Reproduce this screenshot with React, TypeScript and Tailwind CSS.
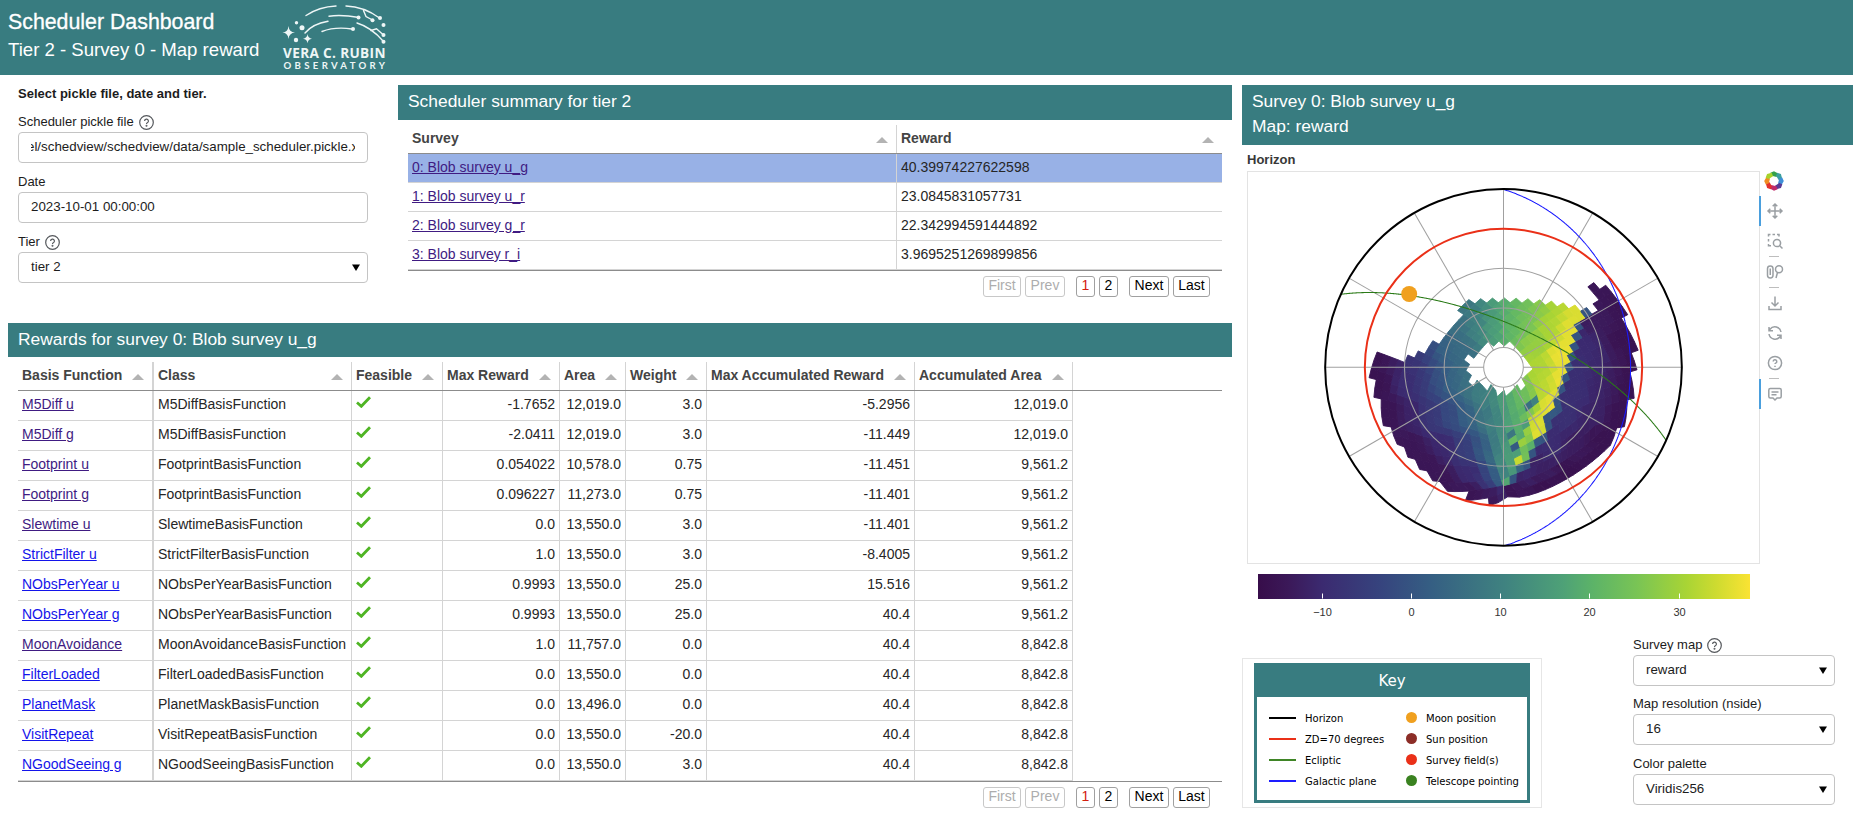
import React from "react";

const RAD = Math.PI / 180;
const LAT = -30.24 * RAD;
const LST = 343.5 * RAD;
const CX = 580.5;
const CY = 562;
const R = 535;

type Pt = [number, number];

/* ---------- sky projection ---------- */

function project(ra: number, dec: number): { x: number; y: number; zd: number } {
  const ha = LST - ra;
  const up = Math.sin(LAT) * Math.sin(dec) + Math.cos(LAT) * Math.cos(dec) * Math.cos(ha);
  const east = -Math.cos(dec) * Math.sin(ha);
  const north = Math.sin(dec) * Math.cos(LAT) - Math.cos(dec) * Math.cos(ha) * Math.sin(LAT);
  const zd = Math.acos(Math.max(-1, Math.min(1, up)));
  const h = Math.hypot(east, north) || 1;
  const r = (zd / (Math.PI / 2)) * R;
  return { x: CX - (east / h) * r, y: CY - (north / h) * r, zd };
}

function greatCircle(poleRa: number, poleDec: number): string {
  const a = poleRa * RAD;
  const d = poleDec * RAD;
  const u = [-Math.sin(a), Math.cos(a), 0];
  const v = [-Math.sin(d) * Math.cos(a), -Math.sin(d) * Math.sin(a), Math.cos(d)];
  let path = "";
  let pen = false;
  for (let i = 0; i <= 1440; i++) {
    const t = (i / 720) * Math.PI;
    const p = u.map((c, k) => c * Math.cos(t) + v[k] * Math.sin(t));
    const q = project(Math.atan2(p[1], p[0]), Math.asin(p[2]));
    if (q.zd < Math.PI / 2) {
      path += `${pen ? "L" : "M"}${q.x.toFixed(1)} ${q.y.toFixed(1)}`;
      pen = true;
    } else pen = false;
  }
  return path;
}

const JR = [2, 2, 2, 2, 3, 3, 3, 3, 4, 4, 4, 4];
const JP = [1, 3, 5, 7, 0, 2, 4, 6, 1, 3, 5, 7];

function faceToSky(f: number, x: number, y: number) {
  const jr = JR[f] - x - y;
  let nr = 1;
  let z: number;
  if (jr < 1) {
    nr = jr;
    z = 1 - (nr * nr) / 3;
  } else if (jr > 3) {
    nr = 4 - jr;
    z = (nr * nr) / 3 - 1;
  } else z = ((2 - jr) * 2) / 3;
  const phi = nr > 1e-9 ? ((Math.PI / 4) * (JP[f] * nr + x - y)) / nr : 0;
  return project(phi, Math.asin(Math.max(-1, Math.min(1, z))));
}

/* ---------- reward field ---------- */

const OUTLINE: Pt[] = [[201,513],[285,545],[298,524],[309,530],[326,512],[340,520],[370,480],[390,488],[430,430],[462,403],[447,388],[476,364],[690,364],[725,368],[800,378],[815,388],[830,382],[860,398],[870,385],[852,370],[870,358],[835,318],[850,308],[870,325],[887,315],[930,360],[940,375],[953,402],[937,410],[985,510],[968,515],[982,570],[967,573],[975,655],[957,655],[960,680],[945,742],[925,740],[905,795],[860,840],[780,893],[700,930],[630,952],[595,952],[575,965],[540,973],[533,955],[470,962],[474,932],[410,933],[385,900],[360,900],[345,870],[328,865],[310,832],[292,830],[282,800],[260,790],[243,738],[219,735],[213,655],[191,650],[197,595],[178,590]];

const HOLE: Pt[] = [[463,535],[480,518],[498,525],[530,487],[548,497],[566,483],[583,495],[600,482],[668,563],[638,590],[648,612],[632,630],[620,615],[588,645],[576,638],[568,645],[553,618],[535,630],[505,600],[487,614],[473,602],[484,590],[470,573],[480,545]];

const SEAM: Pt[] = [[818,375],[812,400],[800,440],[792,480],[775,520],[770,570],[755,610],[742,650],[735,680],[705,720],[708,750],[690,775],[660,800],[658,835],[620,870],[600,900],[588,918]];

const WEST: number[][] = [[476,370,.45],[520,365,.52],[560,365,.62],[600,370,.68],[640,375,.74],[690,370,.8],[740,375,.88],[790,390,.95],[780,450,.97],[750,520,.98],[755,600,.98],[725,670,.98],[680,720,.96],[720,440,.88],[680,480,.83],[690,560,.88],[700,620,.9],[650,440,.76],[600,440,.69],[550,440,.6],[500,440,.5],[450,430,.42],[400,500,.36],[440,500,.4],[350,500,.25],[300,540,.17],[250,545,.08],[210,530,.03],[200,600,.03],[240,700,.04],[300,600,.14],[340,600,.2],[380,600,.3],[430,600,.38],[470,600,.43],[510,640,.48],[550,660,.53],[600,650,.65],[640,640,.74],[300,700,.1],[360,700,.19],[420,700,.27],[470,700,.36],[520,700,.44],[560,720,.5],[600,720,.63],[640,690,.7],[300,800,.05],[400,800,.12],[470,800,.22],[520,800,.34],[560,800,.48],[400,900,.05],[480,880,.13],[540,890,.24],[570,880,.42],[588,895,.6],[600,800,.62],[600,850,.62],[480,940,.04],[540,950,.05],[570,940,.08],[350,850,.05]];

const EAST: number[][] = [[850,320,.05],[870,420,.07],[930,380,.04],[940,480,.03],[960,560,.02],[920,550,.07],[870,550,.12],[830,500,.13],[800,560,.15],[810,640,.15],[870,630,.11],[760,700,.16],[900,640,.08],[940,640,.03],[930,700,.03],[850,700,.1],[880,780,.03],[800,800,.08],[840,840,.03],[720,800,.14],[700,860,.09],[780,880,.02],[650,880,.12],[620,920,.06],[600,945,.03],[700,925,.02]];

const SPOTS: number[][] = [[662,670,.42],[640,692,.68],[682,655,.5],[625,725,.66],[645,735,.6],[605,755,.45],[680,757,.96],[655,770,.8],[638,785,.84],[615,797,.33],[690,778,.33],[628,835,.92],[650,825,.75],[610,860,.7],[632,860,.38],[590,895,.64],[660,742,.7],[705,740,.72],[640,745,.52],[650,805,.74],[722,700,.33],[605,780,.72]];

const STOPS: [number, number, number, number][] = [[0,55,13,74],[.06,59,24,88],[.13,59,42,112],[.25,54,68,126],[.35,53,94,131],[.5,63,130,128],[.62,78,161,119],[.68,92,179,104],[.77,121,196,85],[.87,168,212,53],[.93,205,219,48],[1,250,227,51]];

function color(v: number): string {
  let i = 0;
  while (i < STOPS.length - 2 && v > STOPS[i + 1][0]) i++;
  const a = STOPS[i];
  const b = STOPS[i + 1];
  const t = Math.max(0, Math.min(1, (v - a[0]) / (b[0] - a[0])));
  return `rgb(${[1, 2, 3].map((k) => Math.round(a[k] + (b[k] - a[k]) * t)).join(",")})`;
}

function inside(poly: Pt[], x: number, y: number): boolean {
  let c = false;
  for (let i = 0, j = poly.length - 1; i < poly.length; j = i++) {
    const [xi, yi] = poly[i];
    const [xj, yj] = poly[j];
    if (yi > y !== yj > y && x < ((xj - xi) * (y - yi)) / (yj - yi) + xi) c = !c;
  }
  return c;
}

function blend(samples: number[][], x: number, y: number): number {
  let s = 0;
  let w = 0;
  for (const [a, b, v] of samples) {
    const k = 1 / Math.pow((a - x) ** 2 + (b - y) ** 2 + 900, 2.6);
    s += v * k;
    w += k;
  }
  return s / w;
}

function seamX(y: number): number {
  if (y < SEAM[0][1]) return SEAM[0][0];
  for (let i = 0; i < SEAM.length - 1; i++) {
    const a = SEAM[i];
    const b = SEAM[i + 1];
    if (y >= a[1] && y < b[1]) return a[0] + ((b[0] - a[0]) * (y - a[1])) / (b[1] - a[1]);
  }
  return 585;
}

function rewardAt(x: number, y: number): number {
  for (const [a, b, v] of SPOTS) if (Math.hypot(a - x, b - y) < 10) return v;
  const d = x - seamX(y);
  if (y < 910 && d > 0 && d < 16) return 0.31;
  return blend(d > 0 ? EAST : WEST, x, y);
}

const CELLS: { points: string; fill: string }[] = [];
for (let f = 0; f < 12; f++)
  for (let i = 0; i < 16; i++)
    for (let j = 0; j < 16; j++) {
      const c = faceToSky(f, (i + 0.5) / 16, (j + 0.5) / 16);
      if (c.zd > 1.4 || !inside(OUTLINE, c.x, c.y) || inside(HOLE, c.x, c.y)) continue;
      const pts = [[0, 0], [1, 0], [1, 1], [0, 1]].map(([a, b]) => {
        const u = Math.min(Math.max((i + a) / 16, 1e-5), 1 - 1e-5);
        const v = Math.min(Math.max((j + b) / 16, 1e-5), 1 - 1e-5);
        const p = faceToSky(f, u, v);
        return `${p.x.toFixed(1)},${p.y.toFixed(1)}`;
      });
      CELLS.push({ points: pts.join(" "), fill: color(rewardAt(c.x, c.y)) });
    }

function SkyMap() {
  const rays = Array.from({ length: 12 }, (_, k) => k * 30 * RAD);
  return (
    <svg width="513" height="393" className="block">
      <g transform="translate(63 9) scale(0.33333)">
        {CELLS.map((c, i) => (
          <polygon key={i} points={c.points} fill={c.fill} stroke={c.fill} strokeWidth="2.8" strokeLinejoin="round" />
        ))}
        <circle cx={CX} cy={CY} r="59" fill="#fff" />
        <g fill="none" stroke="#a0a0a0" strokeWidth="3.1">
          {[59.5, 178, 297].map((r) => (
            <circle key={r} cx={CX} cy={CY} r={r} />
          ))}
          {rays.map((t) => (
            <line key={t} x1={CX + 59.5 * Math.sin(t)} y1={CY + 59.5 * Math.cos(t)} x2={CX + R * Math.sin(t)} y2={CY + R * Math.cos(t)} />
          ))}
        </g>
        <path d={greatCircle(270, 66.56)} fill="none" stroke="#2a7a17" strokeWidth="3.2" />
        <path d={greatCircle(192.86, 27.13)} fill="none" stroke="#1a1aff" strokeWidth="3.2" />
        <circle cx={CX} cy={CY} r="416" fill="none" stroke="#ea3018" strokeWidth="6" />
        <circle cx={CX} cy={CY} r={R} fill="none" stroke="#000" strokeWidth="6" />
        <circle cx="297.5" cy="342" r="24" fill="#f0a01f" />
      </g>
    </svg>
  );
}

/* ---------- small pieces ---------- */

function Help() {
  return (
    <svg width="15" height="15" viewBox="0 0 15 15" fill="none" stroke="#55585c" strokeWidth="1.2">
      <circle cx="7.5" cy="7.5" r="6.8" />
      <path d="M5.6 6.1a1.9 1.9 0 1 1 2.7 1.7c-.6.3-.8.6-.8 1.1" />
      <circle cx="7.5" cy="10.8" r=".4" fill="#55585c" />
    </svg>
  );
}

function Label({ text, help }: { text: string; help?: boolean }) {
  return (
    <div className="flex h-[20px] items-center gap-[5px] text-[13px] text-[#1c1c1c]">
      <span>{text}</span>
      {help && <Help />}
    </div>
  );
}

function Select({ value }: { value: string }) {
  return (
    <div className="flex h-[31px] items-center justify-between rounded-[4px] border border-[#c4c4c4] bg-white pr-[7px] pl-[12px] text-[13.33px] text-[#1c1c1c]">
      <span className="pb-[2px]">{value}</span>
      <svg width="8" height="7" viewBox="0 0 8 7">
        <path d="M0 .5H8L4 7Z" fill="#000" />
      </svg>
    </div>
  );
}

function SortArrow() {
  return (
    <svg width="12" height="6" viewBox="0 0 12 6" className="mt-[2px] shrink-0">
      <path d="M0 6L6 0L12 6Z" fill="#b3b3b3" />
    </svg>
  );
}

function Pager() {
  const box = "flex h-[21px] items-center justify-center rounded-[3px] border bg-white pb-[2px]";
  return (
    <div className="flex justify-end pt-[5px] pr-[12px] text-[14px] text-black">
      <div className={`${box} w-[38px] border-[#c8c8c8] text-[#adadad]`}>First</div>
      <div className={`${box} ml-[4px] w-[40px] border-[#c8c8c8] text-[#adadad]`}>Prev</div>
      <div className={`${box} ml-[11px] w-[19px] border-[#a0a0a0] text-[#d3200f]`}>1</div>
      <div className={`${box} ml-[4px] w-[19px] border-[#a0a0a0]`}>2</div>
      <div className={`${box} ml-[11px] w-[40px] border-[#a0a0a0]`}>Next</div>
      <div className={`${box} ml-[4px] w-[37px] border-[#a0a0a0]`}>Last</div>
    </div>
  );
}

function Logo() {
  return (
    <svg width="112" height="75" viewBox="0 0 112 75" fill="none" stroke="#eef6f6" strokeLinecap="round">
      <g strokeWidth="1.4">
        <path d="M27 15.500C36 9.500 46 6.500 57 6" />
        <path d="M67 6C81 6.500 91 11 100.500 18" />
        <path d="M50 16.200C61 14.500 69 15.500 80 17.500" />
        <path d="M26 33C31 27 39 23 49 21.300" />
        <path d="M43 31.500C52 28 63 27.500 73 29" />
        <path d="M78 23C88 26 96 31.500 104.500 41.500" />
        <path d="M84.500 10.500L87 16.500L93.500 20" />
        <path d="M92 30.500L97.500 28.800L104.500 35" />
      </g>
      <g fill="#eef6f6" stroke="none">
        <circle cx="101" cy="18" r="2" />
        <circle cx="104.500" cy="25" r="2" />
        <circle cx="93.500" cy="20.200" r="2" />
        <circle cx="79.500" cy="17.600" r="2" />
        <circle cx="74" cy="29" r="2" />
        <circle cx="104.500" cy="35" r="2" />
        <circle cx="104.500" cy="41.800" r="2" />
        <circle cx="17.500" cy="22.800" r="1.700" />
        <circle cx="23" cy="27.700" r="2.500" />
        <circle cx="17" cy="40" r="2.200" />
        <path d="M9.500 26Q10 32 16 32.500Q10 33 9.500 39Q9 33 3.500 32.500Q9 32 9.500 26Z" />
        <path d="M28.500 34Q29 38.300 33 38.700Q29 39 28.500 43.300Q28 39 24 38.700Q28 38.300 28.500 34Z" />
        <text x="4" y="58.300" fontFamily="Open Sans, sans-serif" fontWeight="700" fontSize="13.600" textLength="102.500" lengthAdjust="spacing">VERA C. RUBIN</text>
        <text x="4.500" y="68.800" fontFamily="Lato, sans-serif" fontWeight="700" fontSize="9.600" textLength="101.500" lengthAdjust="spacing">OBSERVATORY</text>
      </g>
    </svg>
  );
}

/* ---------- tables ---------- */

const SURVEYS = [
  ["0: Blob survey u_g", "40.39974227622598"],
  ["1: Blob survey u_r", "23.0845831057731"],
  ["2: Blob survey g_r", "22.342994591444892"],
  ["3: Blob survey r_i", "3.9695251269899856"],
];

const COLS: [string, string][] = [
  ["Basis Function", "w-[136px] border-r-2"],
  ["Class", "w-[198px] border-r"],
  ["Feasible", "w-[91px] border-r"],
  ["Max Reward", "w-[117px] border-r"],
  ["Area", "w-[66px] border-r"],
  ["Weight", "w-[81px] border-r"],
  ["Max Accumulated Reward", "w-[208px] border-r"],
  ["Accumulated Area", "w-[158px] border-r"],
];

const ROWS: [string, boolean, string, string, string, string, string, string][] = [
  ["M5Diff u", true, "M5Diff", "-1.7652", "12,019.0", "3.0", "-5.2956", "12,019.0"],
  ["M5Diff g", true, "M5Diff", "-2.0411", "12,019.0", "3.0", "-11.449", "12,019.0"],
  ["Footprint u", true, "Footprint", "0.054022", "10,578.0", "0.75", "-11.451", "9,561.2"],
  ["Footprint g", true, "Footprint", "0.096227", "11,273.0", "0.75", "-11.401", "9,561.2"],
  ["Slewtime u", true, "Slewtime", "0.0", "13,550.0", "3.0", "-11.401", "9,561.2"],
  ["StrictFilter u", false, "StrictFilter", "1.0", "13,550.0", "3.0", "-8.4005", "9,561.2"],
  ["NObsPerYear u", false, "NObsPerYear", "0.9993", "13,550.0", "25.0", "15.516", "9,561.2"],
  ["NObsPerYear g", false, "NObsPerYear", "0.9993", "13,550.0", "25.0", "40.4", "9,561.2"],
  ["MoonAvoidance", true, "MoonAvoidance", "1.0", "11,757.0", "0.0", "40.4", "8,842.8"],
  ["FilterLoaded", false, "FilterLoaded", "0.0", "13,550.0", "0.0", "40.4", "8,842.8"],
  ["PlanetMask", false, "PlanetMask", "0.0", "13,496.0", "0.0", "40.4", "8,842.8"],
  ["VisitRepeat", false, "VisitRepeat", "0.0", "13,550.0", "-20.0", "40.4", "8,842.8"],
  ["NGoodSeeing g", false, "NGoodSeeing", "0.0", "13,550.0", "3.0", "40.4", "8,842.8"],
];

function SummaryTable() {
  return (
    <div className="mt-[5px] ml-[10px] w-[814px]">
      <div className="flex h-[29px] border-b border-[#8c8c8c] font-bold text-[#444]">
        <div className="flex w-[489px] items-center justify-between border-r border-[#d4d4d4] pr-[8px] pl-[4px]">
          <span className="pb-[2px]">Survey</span>
          <SortArrow />
        </div>
        <div className="flex flex-1 items-center justify-between pr-[8px] pl-[4px]">
          <span className="pb-[2px]">Reward</span>
          <SortArrow />
        </div>
      </div>
      {SURVEYS.map(([name, reward], i) => (
        <div key={name} className={`flex h-[29px] border-b border-[#d4d4d4] ${i === 0 ? "bg-[#98b1e6]" : ""}`}>
          <div className="w-[489px] border-r border-[#d4d4d4] pl-[4px] leading-[27px] text-[#401b82] underline">{name}</div>
          <div className="pl-[4px] leading-[27px] text-[#262626]">{reward}</div>
        </div>
      ))}
      <div className="border-t border-[#8c8c8c]">
        <Pager />
      </div>
    </div>
  );
}

function RewardsTable() {
  return (
    <div className="mt-[5px] ml-[10px] w-[1204px]">
      <div className="flex h-[29px] border-b border-[#8c8c8c] font-bold text-[#444]">
        {COLS.map(([name, cls]) => (
          <div key={name} className={`${cls} flex items-center justify-between border-[#d4d4d4] pr-[8px] pl-[4px] whitespace-nowrap`}>
            <span className="pb-[2px]">{name}</span>
            <SortArrow />
          </div>
        ))}
      </div>
      {ROWS.map(([name, visited, cls, ...nums]) => (
        <div key={name} className="flex h-[30px] w-[1055px] border-b border-[#d4d4d4] leading-[27px] text-[#262626]">
          <div className={`${COLS[0][1]} border-[#d4d4d4] pl-[4px]`}>
            <span className={visited ? "text-[#401b82] underline" : "text-[#1414ea] underline"}>{name}</span>
          </div>
          <div className={`${COLS[1][1]} border-[#d4d4d4] pl-[4px] whitespace-nowrap`}>{cls}BasisFunction</div>
          <div className={`${COLS[2][1]} border-[#d4d4d4] pt-[5px] pl-[4px]`}>
            <svg width="15" height="12" viewBox="0 0 15 12" fill="none">
              <path d="M1 6.500L5.300 10.300L14 1.200" stroke="#4fb524" strokeWidth="2.800" />
            </svg>
          </div>
          {nums.map((n, i) => (
            <div key={i} className={`${COLS[i + 3][1]} border-[#d4d4d4] pr-[4px] text-right`}>{n}</div>
          ))}
        </div>
      ))}
      <div className="border-t border-[#8c8c8c]">
        <Pager />
      </div>
    </div>
  );
}

/* ---------- plot tools, colour bar, key ---------- */

const PETALS = ["#35a14b", "#3b9fa0", "#3f8fd8", "#5a3a94", "#c02b6a", "#e2302c", "#f08c22", "#a8d22c"];

function ToolBar() {
  const line = "mx-auto h-px w-[10px] bg-[#bdbdbd]";
  const svg = { width: 18, height: 18, viewBox: "0 0 18 18", fill: "none", stroke: "#9a9fa3", strokeWidth: 1.5 };
  const cell = "flex h-[30px] w-[30px] items-center justify-center border-l-2 pr-px";
  return (
    <div className="-ml-px flex w-[30px] flex-col">
      <div className="flex h-[25px] items-start justify-center">
        <svg width="20" height="20" viewBox="-10 -10 20 20">
          {PETALS.map((c, i) => (
            <path key={c} d="M-3.600 -8.200L0 -9.800L4.200 -7.400L2.600 -4L-2.300 -5.200Z" fill={c} transform={`rotate(${i * 45})`} />
          ))}
        </svg>
      </div>
      <div className={`${cell} border-[#4a9fdd]`}>
        <svg {...svg}>
          <path d="M9 2V16M2 9H16M6.700 4.300L9 2L11.300 4.300M6.700 13.700L9 16L11.300 13.700M4.300 6.700L2 9L4.300 11.300M13.700 6.700L16 9L13.700 11.300" />
        </svg>
      </div>
      <div className={`${cell} border-transparent`}>
        <svg {...svg}>
          <path d="M2.500 4.500V2.500H4.500M6.500 2.500H9M11 2.500H13V4.500M2.500 7V9.500M2.500 12V13.800H5" />
          <circle cx="11" cy="11" r="3.600" />
          <path d="M13.700 13.700L16.500 16.500" />
        </svg>
      </div>
      <div className={line} />
      <div className={`${cell} border-transparent`}>
        <svg {...svg}>
          <rect x="1.500" y="3" width="5.500" height="12" rx="2.700" />
          <path d="M4.250 5.500V12" />
          <circle cx="13" cy="6.300" r="3.500" />
          <path d="M11.500 9.500L10 15" />
        </svg>
      </div>
      <div className={line} />
      <div className={`${cell} border-transparent`}>
        <svg {...svg}>
          <path d="M9 2.500V11.500M5.500 8.500L9 12L12.500 8.500M3 12V15.500H15V12" />
        </svg>
      </div>
      <div className={`${cell} border-transparent`}>
        <svg {...svg}>
          <path d="M15 8A6.200 6.200 0 0 0 4 5.200L3.200 6.500M3 3V6.800H7M3 10A6.200 6.200 0 0 0 14 12.800L14.800 11.500M15 15V11.200H11" />
        </svg>
      </div>
      <div className={`${cell} border-transparent`}>
        <svg {...svg}>
          <circle cx="9" cy="9" r="6.600" />
          <path d="M7.200 7.500a1.800 1.800 0 1 1 2.600 1.600c-.6.300-.8.500-.8 1" />
          <path d="M9 11.800V13" />
        </svg>
      </div>
      <div className={line} />
      <div className={`${cell} border-[#4a9fdd]`}>
        <svg {...svg}>
          <path d="M4.300 3.500H13.700A1.500 1.500 0 0 1 15.200 5V11.500A1.500 1.500 0 0 1 13.700 13H11L9 15L7 13H4.300A1.500 1.500 0 0 1 2.800 11.500V5A1.500 1.500 0 0 1 4.300 3.500ZM5.500 7H12.500M5.500 9.700H10.500" />
        </svg>
      </div>
    </div>
  );
}

const TICKS: [number, string][] = [[64.5, "−10"], [153.5, "0"], [242.5, "10"], [331.5, "20"], [421.5, "30"]];

function ColorBar() {
  return (
    <svg width="492" height="48" className="block">
      <defs>
        <linearGradient id="bar">
          {STOPS.map((s) => (
            <stop key={s[0]} offset={s[0]} stopColor={`rgb(${s[1]},${s[2]},${s[3]})`} />
          ))}
        </linearGradient>
      </defs>
      <rect width="492" height="25" fill="url(#bar)" />
      {TICKS.map(([x, t]) => (
        <g key={t}>
          <path d={`M${x} 19.500V24.500`} stroke="#fff" />
          <text x={x} y="42" textAnchor="middle" fontSize="11" fontFamily="Liberation Sans, sans-serif" fill="#333">{t}</text>
        </g>
      ))}
    </svg>
  );
}

const KEY: [string, string, string, string][] = [
  ["bg-black", "Horizon", "bg-[#f0a01f]", "Moon position"],
  ["bg-[#ea3018]", "ZD=70 degrees", "bg-[#8c2d27]", "Sun position"],
  ["bg-[#3f8526]", "Ecliptic", "bg-[#ea3018]", "Survey field(s)"],
  ["bg-[#1d1dff]", "Galactic plane", "bg-[#3a8220]", "Telescope pointing"],
];

function KeyBox() {
  return (
    <div className="h-[150px] w-[300px] border border-[#e6e6e6] pt-[4px] pl-[11px] font-['DejaVu_Sans',sans-serif]">
      <div className="h-[140px] w-[276px] border-[3px] border-t-0 border-[#387c80] bg-white">
        <div className="h-[34px] bg-[#387c80] pt-px text-center text-[15px] leading-[34px] text-white">Key</div>
        <div className="flex flex-col pt-[10px] text-[10px] text-black">
          {KEY.map(([line, a, dot, b]) => (
            <div key={a} className="flex h-[21px] items-center">
              <div className={`${line} ml-[12px] h-[2px] w-[27px]`} />
              <div className="w-[101px] pl-[9px] pt-px whitespace-nowrap">{a}</div>
              <div className={`${dot} ml-[9px] size-[11px] rounded-full`} />
              <div className="pl-[9px] pt-px whitespace-nowrap">{b}</div>
            </div>
          ))}
        </div>
      </div>
    </div>
  );
}

export default function App() {
  return (
    <div className="h-[825px] w-[1853px] overflow-hidden bg-white font-['Liberation_Sans',Arial,sans-serif] text-[14px]">
      <header className="flex h-[75px] bg-[#387c80] text-white">
        <div className="w-[279px] pt-[8px] pl-[8px] whitespace-nowrap">
          <div className="text-[21.33px] leading-[28px] [-webkit-text-stroke:0.3px_white]">Scheduler Dashboard</div>
          <div className="text-[18.6px] leading-[28px]">Tier 2 - Survey 0 - Map reward</div>
        </div>
        <Logo />
      </header>

      <main className="flex gap-[10px] pt-[10px]">
        <div className="w-[1232px]">
          <div className="flex h-[238px]">
            <section className="w-[398px] pr-[30px] pl-[18px]">
              <h3 className="mb-[7px] h-[20px] text-[13px] leading-[18px] font-bold text-[#1c1c1c]">Select pickle file, date and tier.</h3>
              <Label text="Scheduler pickle file" help />
              <div className="h-[31px] rounded-[4px] border border-[#c4c4c4] px-[12px] text-[13.33px] leading-[28px] text-[#1c1c1c]">
                <div className="overflow-hidden whitespace-nowrap -indent-[4px]">el/schedview/schedview/data/sample_scheduler.pickle.xz</div>
              </div>
              <div className="h-[9px]" />
              <Label text="Date" />
              <div className="h-[31px] rounded-[4px] border border-[#c4c4c4] px-[12px] text-[13.33px] leading-[28px] text-[#1c1c1c]">2023-10-01 00:00:00</div>
              <div className="h-[9px]" />
              <Label text="Tier" help />
              <Select value="tier 2" />
            </section>
            <section className="w-[834px]">
              <h2 className="h-[35px] bg-[#387c80] pl-[10px] text-[17.4px] leading-[32px] text-white">Scheduler summary for tier 2</h2>
              <SummaryTable />
            </section>
          </div>
          <section className="ml-[8px]">
            <h2 className="h-[34px] bg-[#387c80] pl-[10px] text-[17.4px] leading-[32px] text-white">Rewards for survey 0: Blob survey u_g</h2>
            <RewardsTable />
          </section>
        </div>

        <section className="w-[611px]">
          <h2 className="h-[60px] bg-[#387c80] pt-[4px] pl-[10px] text-[17.4px] leading-[25px] text-white">
            Survey 0: Blob survey u_g
            <br />
            Map: reward
          </h2>
          <div className="h-[26px] pl-[5px] text-[13px] leading-[30px] font-bold text-[#383838]">Horizon</div>
          <div className="flex pl-[5px]">
            <div className="h-[393px] w-[513px] border border-[#e3e3e3]">
              <div className="-m-px">
                <SkyMap />
              </div>
            </div>
            <ToolBar />
          </div>
          <div className="pt-[10px] pl-[16px]">
            <ColorBar />
          </div>
          <div className="flex justify-between pt-[13px] pr-[18px]">
            <div className="pt-[23px]">
              <KeyBox />
            </div>
            <div className="w-[202px]">
              <Label text="Survey map" help />
              <Select value="reward" />
              <div className="h-[8px]" />
              <Label text="Map resolution (nside)" />
              <Select value="16" />
              <div className="h-[9px]" />
              <Label text="Color palette" />
              <Select value="Viridis256" />
            </div>
          </div>
        </section>
      </main>
    </div>
  );
}
